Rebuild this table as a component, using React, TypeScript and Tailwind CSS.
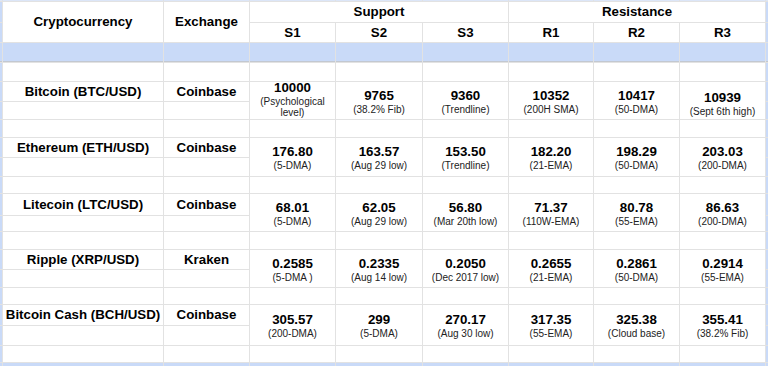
import React from "react";

interface Level {
  value: string;
  note: string;
  shift?: string;
}

interface Row {
  name: string;
  exchange: string;
  levels: Level[];
}

const rows: Row[] = [
  {
    name: "Bitcoin (BTC/USD)",
    exchange: "Coinbase",
    levels: [
      { value: "10000", note: "(Psychological level)", shift: "-mt-1" },
      { value: "9765", note: "(38.2% Fib)" },
      { value: "9360", note: "(Trendline)" },
      { value: "10352", note: "(200H SMA)" },
      { value: "10417", note: "(50-DMA)" },
      { value: "10939", note: "(Sept 6th high)", shift: "pt-[5px]" },
    ],
  },
  {
    name: "Ethereum (ETH/USD)",
    exchange: "Coinbase",
    levels: [
      { value: "176.80", note: "(5-DMA)" },
      { value: "163.57", note: "(Aug 29 low)" },
      { value: "153.50", note: "(Trendline)" },
      { value: "182.20", note: "(21-EMA)" },
      { value: "198.29", note: "(50-DMA)" },
      { value: "203.03", note: "(200-DMA)" },
    ],
  },
  {
    name: "Litecoin (LTC/USD)",
    exchange: "Coinbase",
    levels: [
      { value: "68.01", note: "(5-DMA)" },
      { value: "62.05", note: "(Aug 29 low)" },
      { value: "56.80", note: "(Mar 20th low)" },
      { value: "71.37", note: "(110W-EMA)" },
      { value: "80.78", note: "(55-EMA)" },
      { value: "86.63", note: "(200-DMA)" },
    ],
  },
  {
    name: "Ripple (XRP/USD)",
    exchange: "Kraken",
    levels: [
      { value: "0.2585", note: "(5-DMA )" },
      { value: "0.2335", note: "(Aug 14 low)" },
      { value: "0.2050", note: "(Dec 2017 low)" },
      { value: "0.2655", note: "(21-EMA)" },
      { value: "0.2861", note: "(50-DMA)" },
      { value: "0.2914", note: "(55-EMA)" },
    ],
  },
  {
    name: "Bitcoin Cash (BCH/USD)",
    exchange: "Coinbase",
    levels: [
      { value: "305.57", note: "(200-DMA)" },
      { value: "299", note: "(5-DMA)" },
      { value: "270.17", note: "(Aug 30 low)" },
      { value: "317.35", note: "(55-EMA)" },
      { value: "325.38", note: "(Cloud base)" },
      { value: "355.41", note: "(38.2% Fib)" },
    ],
  },
];

const subHeaders = ["S1", "S2", "S3", "R1", "R2", "R3"];
const inner = [0, 1, 2, 3, 4, 5, 6, 7];

const Strip = () => <div className="bg-[#c9daf8]" />;

const SpacerRow = ({ tag }: { tag: string }) => (
  <>
    <Strip />
    {inner.map((i) => (
      <div key={tag + i} className="bg-white" />
    ))}
    <Strip />
  </>
);

const App = () => {
  return (
    <div
      className="w-[768px] h-[366px] overflow-hidden bg-[#e2e2e2] text-black"
      style={{ fontFamily: '"Liberation Sans", Arial, sans-serif' }}
    >
      <div className="grid gap-px grid-cols-[2px_160px_85px_85px_86px_85px_84px_85px_85px_2px] grid-rows-[1px_20px_19px_19px_18px_19px_17px_17px_19px_18px_16px_21px_15px_17px_19px_17px_16px_20px_19px_16px_3px]">
        {/* cut-off row above the header */}
        <div className="bg-[#dce6f8]" />
        {inner.map((i) => (
          <div key={"top" + i} className="bg-[#dce6f8]" />
        ))}
        <div className="bg-[#dce6f8]" />

        {/* header */}
        <Strip />
        <div className="row-span-2 bg-white flex items-center justify-center text-[13.3px] font-bold">
          Cryptocurrency
        </div>
        <div className="row-span-2 bg-white flex items-center justify-center text-[13.3px] font-bold">
          Exchange
        </div>
        <div className="col-span-3 bg-white flex items-center justify-center text-[13.3px] font-bold">
          Support
        </div>
        <div className="col-span-3 bg-white flex items-center justify-center text-[13.3px] font-bold">
          Resistance
        </div>
        <Strip />

        <Strip />
        {subHeaders.map((h) => (
          <div key={h} className="bg-white flex items-center justify-center text-[13.3px] font-bold">
            {h}
          </div>
        ))}
        <Strip />

        {/* blue band */}
        <div className="bg-[#c9daf8] border-b border-[#c3c8d0]" />
        {inner.map((i) => (
          <div key={"band" + i} className="bg-[#c9daf8] border-b border-[#c3c8d0]" />
        ))}
        <div className="bg-[#c9daf8] border-b border-[#c3c8d0]" />

        {rows.map((row) => (
          <React.Fragment key={row.name}>
            <SpacerRow tag={row.name + "-sp"} />

            <Strip />
            <div className="bg-white flex items-center justify-center text-[13.3px] font-bold whitespace-nowrap">
              {row.name}
            </div>
            <div className="bg-white flex items-center justify-center text-[13.3px] font-bold">
              {row.exchange}
            </div>
            {row.levels.map((lv) => (
              <div
                key={lv.value}
                className="row-span-2 bg-white flex flex-col justify-center items-center px-[3px]"
              >
                <div className={"flex flex-col items-center text-center " + (lv.shift ?? "")}>
                  <span className="text-[13.3px] leading-[17px] font-bold">{lv.value}</span>
                  <span className="text-[10px] leading-[11px] text-[#222]">{lv.note}</span>
                </div>
              </div>
            ))}
            <Strip />

            <Strip />
            <div className="bg-white" />
            <div className="bg-white" />
            <Strip />
          </React.Fragment>
        ))}

        <SpacerRow tag="last" />

        {/* bottom edge */}
        <Strip />
        {inner.map((i) => (
          <div key={"bot" + i} className="bg-[#c9daf8]" />
        ))}
        <Strip />
      </div>
    </div>
  );
};

export default App;
